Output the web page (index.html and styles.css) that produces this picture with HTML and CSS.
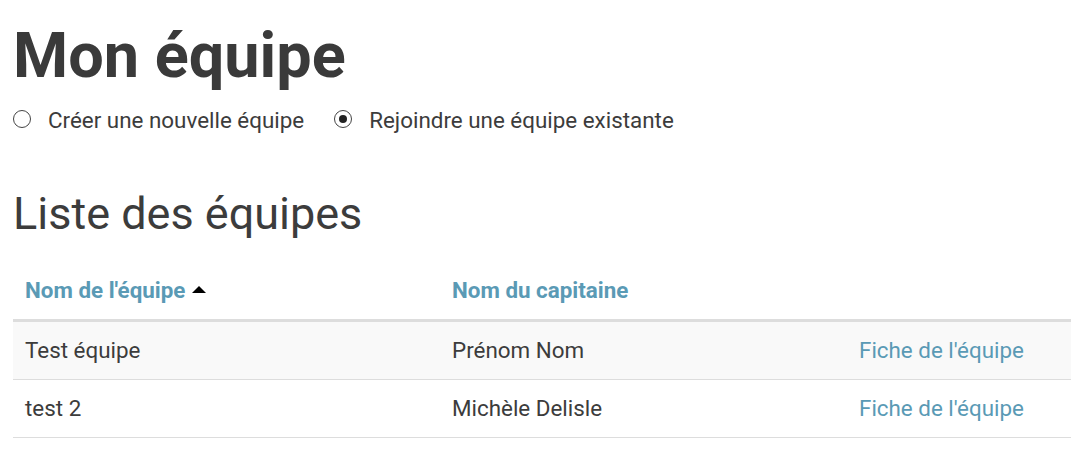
FILE: index.html
```html
<!DOCTYPE html>
<html lang="fr">
<head>
<meta charset="utf-8">
<title>Mon équipe</title>
<link rel="stylesheet" href="styles.css">
</head>
<body>
<main class="page">
  <h1 class="title">Mon équipe</h1>
  <div class="choices">
    <label class="choice"><input type="radio" name="mode" class="radio"><span>Créer une nouvelle équipe</span></label>
    <label class="choice"><input type="radio" name="mode" class="radio" checked><span>Rejoindre une équipe existante</span></label>
  </div>
  <h2 class="subtitle">Liste des équipes</h2>
  <table class="teams">
    <colgroup>
      <col class="col-name">
      <col class="col-captain">
      <col class="col-link">
    </colgroup>
    <thead>
      <tr>
        <th><a href="#" class="sort">Nom de l'équipe</a> <span class="caret"></span></th>
        <th><a href="#" class="sort">Nom du capitaine</a></th>
        <th></th>
      </tr>
    </thead>
    <tbody>
      <tr class="odd">
        <td>Test équipe</td>
        <td>Prénom Nom</td>
        <td><a href="#" class="link">Fiche de l'équipe</a></td>
      </tr>
      <tr>
        <td>test 2</td>
        <td>Michèle Delisle</td>
        <td><a href="#" class="link">Fiche de l'équipe</a></td>
      </tr>
    </tbody>
  </table>
</main>
</body>
</html>
```

FILE: styles.css
```css
* { box-sizing: border-box; }
html, body { margin: 0; padding: 0; background: #fff; }
body {
  font-family: Roboto, "Liberation Sans", Arial, sans-serif;
  color: #3c3c3c;
  font-size: 22.4px;
  line-height: 28px;
}
.page { padding: 0 0 0 13px; }
.title {
  margin: 21px 0 0;
  font-size: 63px;
  line-height: 1.1;
  font-weight: 700;
  color: #3a3a3a;
}
.choices {
  display: flex;
  gap: 30px;
  margin-top: 16px;
  height: 28px;
  align-items: center;
}
.choice {
  display: flex;
  align-items: center;
  gap: 17px;
  cursor: pointer;
}
.radio {
  appearance: none;
  -webkit-appearance: none;
  margin: 0;
  width: 18px;
  height: 18px;
  border: 1px solid #444;
  border-radius: 50%;
  background: #fff;
  display: grid;
  place-items: center;
  position: relative;
  top: -1px;
}
.radio:checked::after {
  content: "";
  width: 8px;
  height: 8px;
  border-radius: 50%;
  background: #222;
}
.subtitle {
  margin: 55px 0 0;
  font-size: 45px;
  line-height: 1.1;
  font-weight: 400;
  color: #3c3c3c;
}
.teams {
  margin-top: 23px;
  width: 100%;
  border-collapse: collapse;
  table-layout: fixed;
}
.col-name { width: 427px; }
.col-captain { width: 407px; }
.col-link { width: auto; }
.teams th, .teams td {
  text-align: left;
  padding: 14px 12px;
  line-height: 29px;
  vertical-align: middle;
}
.teams th {
  font-weight: 700;
  border-bottom: 3px solid #ddd;
}
.teams td { border-bottom: 1px solid #ddd; }
.teams tr.odd td { background: #f9f9f9; }
.sort, .link {
  color: #5a9ab5;
  text-decoration: none;
}
.caret {
  display: inline-block;
  width: 0;
  height: 0;
  border-left: 7px solid transparent;
  border-right: 7px solid transparent;
  border-bottom: 7px solid #000;
  vertical-align: middle;
  position: relative;
  top: -2px;
  margin-left: 1px;
}
```
